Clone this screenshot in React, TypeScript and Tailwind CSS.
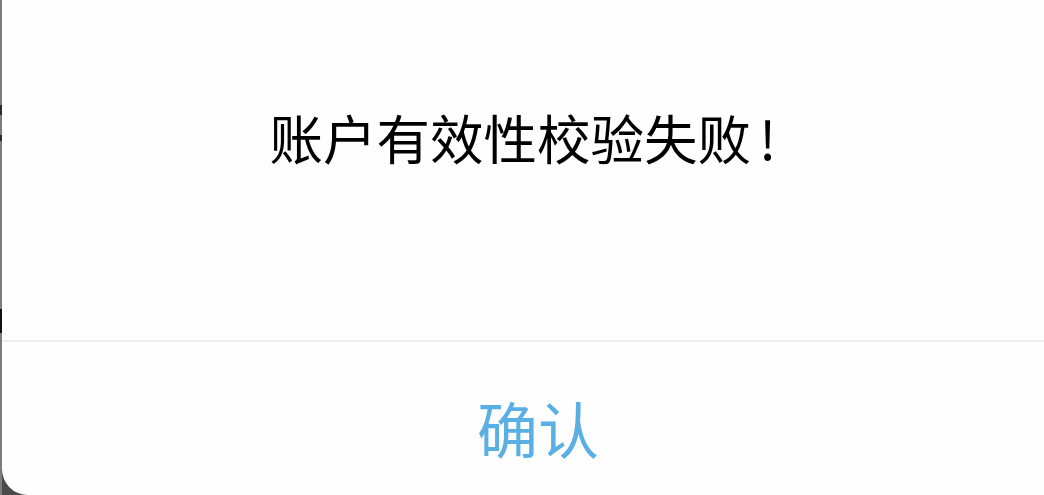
export default function App() {
  return (
    <div className="flex h-[495px] w-full bg-[#4a4a4a] font-['Noto_Sans_CJK_SC','Noto_Sans',sans-serif]">
      {/* left edge of the screen behind the dialog */}
      <div className="flex w-[2px] flex-col bg-[#7c7c7c]">
        <div className="h-[105px]" />
        <div className="h-[10px] bg-[#2a2a2a]" />
        <div className="h-[20px]" />
        <div className="h-[6px] bg-[#2a2a2a]" />
        <div className="h-[168px]" />
        <div className="h-[24px] bg-[#111111]" />
        <div className="flex-1" />
      </div>

      <div className="flex flex-1 flex-col overflow-hidden rounded-bl-[26px] bg-[#fefefe]">
        <div className="flex h-[340px] items-center justify-center pb-[66px]">
          <p className="text-[53.5px] leading-none text-black">
            账户有效性校验失败<span className="ml-[8px]">!</span>
          </p>
        </div>
        <div className="h-[2px] bg-[#eeeeee]" />
        <button className="flex flex-1 items-center justify-center pl-[30px] pt-[18px] text-[61px] leading-none text-[#5aafe4]">
          确认
        </button>
      </div>
    </div>
  );
}
